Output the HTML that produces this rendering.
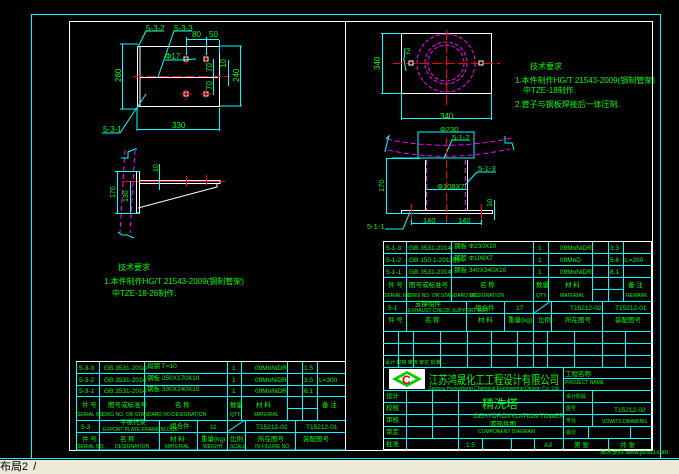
<!DOCTYPE html>
<html><head><meta charset="utf-8"><style>
body{margin:0;width:679px;height:474px;background:#000;overflow:hidden;font-family:"Liberation Sans","Noto Sans CJK SC",sans-serif}
svg{position:absolute;left:0;top:0}
.bar{position:absolute;left:0;top:460px;width:679px;height:14px;background:#ece9d8;font-size:11px;color:#000;line-height:14px}
</style></head><body>
<svg width="679" height="474" viewBox="0 0 679 474" font-family="Liberation Sans, Noto Sans CJK SC, sans-serif">
<g fill="none">
<rect x="31.5" y="14.5" width="629" height="444" stroke="#0ff"/>
<line x1="0" y1="458.5" x2="679" y2="458.5" stroke="#0ff"/>
<rect x="69.5" y="21.5" width="583" height="429" stroke="#fff"/>
<line x1="345.5" y1="21" x2="345.5" y2="450" stroke="#fff"/>
</g>
<!-- left top drawing -->
<g fill="none" stroke="#fff">
<rect x="137.5" y="46.5" width="82" height="60"/>
<line x1="140" y1="46" x2="140" y2="107"/>
</g>
<line x1="133" y1="76.5" x2="230" y2="76.5" stroke="#f00" stroke-dasharray="10 3"/>
<line x1="140" y1="77.5" x2="218" y2="77.5" stroke="#fff"/>
<g fill="#000" stroke="#fff"><rect x="184" y="57" width="4" height="4"/><rect x="204" y="57" width="4" height="4"/><rect x="184" y="92" width="4" height="4"/><rect x="204" y="92" width="4" height="4"/></g>
<g stroke="#f00"><line x1="186" y1="54" x2="186" y2="64"/><line x1="206" y1="54" x2="206" y2="64"/><line x1="181" y1="94" x2="192" y2="94"/><line x1="186" y1="89" x2="186" y2="100"/><line x1="201" y1="94" x2="212" y2="94"/><line x1="206" y1="90" x2="206" y2="98"/></g>
<g stroke="#0ff" fill="none">
<polyline points="120,44 138,44"/><polyline points="120,109 138,109"/><line x1="122.5" y1="44" x2="122.5" y2="109"/>
<line x1="220" y1="46" x2="242" y2="46"/><line x1="220" y1="106" x2="242" y2="106"/><line x1="240.5" y1="46" x2="240.5" y2="106"/>
<line x1="137" y1="108" x2="137" y2="131"/><line x1="219.5" y1="108" x2="219.5" y2="131"/><line x1="137" y1="129.5" x2="219" y2="129.5"/>
<line x1="186.5" y1="37" x2="186.5" y2="55"/><line x1="206.5" y1="37" x2="206.5" y2="55"/><line x1="186" y1="39.5" x2="219" y2="39.5"/>
<line x1="219.5" y1="40" x2="219.5" y2="54"/>
<polyline points="137,49 146,31 164,31"/><polyline points="158,77 174,31 192,31"/><polyline points="102,133 120,133 146,94"/>
<polyline points="165,60 180,60 196,59"/>
<line x1="228.5" y1="60" x2="228.5" y2="86"/><line x1="213.5" y1="59" x2="213.5" y2="95"/>
</g>
<g fill="#0f0" font-size="8">
<text x="146" y="31">5-3-2</text><text x="174" y="31">5-3-3</text><text x="192" y="37">80</text><text x="209" y="37">50</text><text x="165" y="59">Φ17</text>
<text x="172" y="128">330</text><text x="103" y="132">5-3-1</text>
<text transform="translate(121,82) rotate(-90)">280</text><text transform="translate(239,82) rotate(-90)">240</text>
<text transform="translate(226,68) rotate(-90)">10</text><text transform="translate(212,72) rotate(-90)">70</text><text transform="translate(212,90) rotate(-90)">70</text>
</g>
<!-- bracket -->
<line x1="122" y1="181.5" x2="225" y2="181.5" stroke="#f00"/>
<g stroke="#fff" fill="none">
<polyline points="139,180.5 220,180.5 220,183.5 139,183.5"/>
<polyline points="217,184 217,187 138,208"/>
<polyline points="136.5,171 136.5,213 139.5,213 139.5,171"/>
</g>
<g stroke="#f00"><line x1="186.5" y1="176" x2="186.5" y2="187"/><line x1="206.5" y1="175" x2="206.5" y2="185"/></g>
<g stroke="#f0f" stroke-dasharray="5 3"><line x1="125" y1="150" x2="120" y2="233"/><line x1="135" y1="150" x2="130" y2="233"/></g>
<g stroke="#0ff" fill="none">
<polyline points="121,158 128,158 128,152 135,149 137,149"/><polyline points="118,232 122,235 127,235 134,238"/>
<line x1="115" y1="171.5" x2="140" y2="171.5"/><line x1="115" y1="213.5" x2="140" y2="213.5"/><line x1="117.5" y1="171" x2="117.5" y2="213"/>
<line x1="130.5" y1="181" x2="130.5" y2="213"/><line x1="159.5" y1="164" x2="159.5" y2="190"/>
</g>
<g fill="#0f0" font-size="7"><text transform="translate(115,198) rotate(-90)">170</text><text transform="translate(128,202) rotate(-90)">130</text><text transform="translate(158,172) rotate(-90)">10</text></g>
<!-- left notes -->
<g fill="#0f0" font-size="8"><text x="118" y="270">技术要求</text><text x="104" y="284">1.本件制作HG/T 21543-2009(钢制管架)</text><text x="112" y="296">中TZE-18-26制作.</text></g>
<!-- right top drawing -->
<rect x="401.5" y="33.5" width="90" height="60" stroke="#fff" fill="none"/>
<g stroke="#f0f" fill="none" stroke-dasharray="4 2"><circle cx="446" cy="63" r="29"/><circle cx="446" cy="63" r="21"/><circle cx="446" cy="63" r="18"/></g>
<g stroke="#f00" stroke-dasharray="10 3"><line x1="393" y1="63.5" x2="500" y2="63.5"/><line x1="446.5" y1="30" x2="446.5" y2="106"/></g>
<g fill="#000" stroke="#fff"><rect x="409" y="61" width="4" height="4"/><rect x="479" y="61" width="4" height="4"/></g>
<g stroke="#0ff" fill="none"><line x1="381" y1="33.5" x2="402" y2="33.5"/><line x1="381" y1="93.5" x2="402" y2="93.5"/><line x1="382.5" y1="34" x2="382.5" y2="93"/>
<line x1="401.5" y1="94" x2="401.5" y2="120"/><line x1="491.5" y1="94" x2="491.5" y2="120"/><line x1="401" y1="118.5" x2="492" y2="118.5"/><polyline points="406,71 404,60 405,48"/></g>
<g fill="#0f0" font-size="8"><text x="440" y="119">340</text><text transform="translate(380,70) rotate(-90)">340</text><text x="406" y="54">2</text>
<text x="530" y="69">技术要求</text><text x="515" y="83">1.本件制作HG/T 21543-2009(钢制管架)</text><text x="523" y="93">中TZE-18制作.</text><text x="515" y="107">2.管子与钢板焊接后一体压制.</text></g>
<!-- right lower -->
<g stroke="#f0f" fill="none" stroke-dasharray="5 3"><path d="M387,139 Q446,152 512,138"/><path d="M388,150 Q446,163 510,149"/><line x1="426.5" y1="160" x2="426.5" y2="211"/><line x1="465.5" y1="160" x2="465.5" y2="211"/></g>
<g stroke="#fff" fill="none"><line x1="425.5" y1="160" x2="425.5" y2="210"/><line x1="467.5" y1="160" x2="467.5" y2="210"/><rect x="401.5" y="210.5" width="91" height="3"/><polyline points="417,158 474,158"/></g>
<g stroke="#0ff" fill="none"><polyline points="418,158 418,132 474,132 474,158 392,158"/><line x1="386" y1="158.5" x2="420" y2="158.5"/><line x1="386" y1="213.5" x2="420" y2="213.5"/><line x1="386.5" y1="158" x2="386.5" y2="213"/>
<polyline points="386,139 389,136 387,143 385,152"/><polyline points="505,136 505,143 512,143 514,150"/>
<line x1="426" y1="189.5" x2="467" y2="189.5"/><polyline points="444,158 452,140 470,140"/><polyline points="465,185 477,172 496,172"/><polyline points="385,229 403,229 410,212"/>
<line x1="411.5" y1="213" x2="411.5" y2="225"/><line x1="481.5" y1="213" x2="481.5" y2="225"/><line x1="411" y1="223.5" x2="481" y2="223.5"/><line x1="494.5" y1="200" x2="494.5" y2="220"/></g>
<g stroke="#f00"><line x1="446.5" y1="138" x2="446.5" y2="226" stroke-dasharray="8 3"/><line x1="411.5" y1="204" x2="411.5" y2="220"/><line x1="481.5" y1="204" x2="481.5" y2="220"/></g>
<g fill="#0f0" font-size="7.5"><text x="440" y="132">Φ230</text><text x="452" y="140">5-1-2</text><text x="478" y="171">5-1-3</text><text x="437" y="189">Φ108X7</text><text x="423" y="223">140</text><text x="458" y="223">140</text><text x="367" y="229">5-1-1</text><text transform="translate(384,192) rotate(-90)">170</text><text transform="translate(492,207) rotate(-90)">10</text></g>
<!-- right table -->
<g stroke="#0ff" fill="none">
<rect x="383.5" y="241.5" width="268" height="208" stroke="#fff"/>
<path d="M383 253.5H652M383 265.5H652M383 277.5H652M383 301.5H652M383 313.5H652M383 331.5H652M383 343.5H652M383 355.5H652M383 367.5H652M383 390.5H652M563 378.5H652M383 402.5H652M383 414.5H652M383 426.5H652M383 438.5H652"/>
<path d="M406.5 242V301M451.5 242V301M533.5 242V301M548.5 242V301M592.5 242V301M608.5 242V301M623.5 242V301M592 289.5H623"/>
<path d="M406.5 301V331M466.5 301V331M504.5 301V331M533.5 301V331M551.5 301V331M602.5 301V331"/>
<path d="M398.5 331V367M413.5 331V367M440.5 331V367M467.5 331V367M491.5 331V367M517.5 331V367M533.5 331V367M547.5 331V367M574.5 331V367M602.5 331V367M625.5 331V367"/>
<path d="M563.5 367V450M406.5 390V450M432.5 390V438M458.5 390V450M592.5 390V426M588.5 426V438M630.5 426V438M482.5 438V450M511.5 438V450M534.5 438V450M608.5 438V450M534 313L551 301"/>
</g>
<rect x="389" y="369" width="36" height="20" fill="#fff"/>
<polygon points="392,379 407,371 422,379 407,387" fill="#0c0"/><polygon points="398,379 407,374 416,379 407,384" fill="#fff"/>
<text x="402" y="384" fill="#e00" font-size="12" font-weight="bold">C</text>
<g fill="#0f0" font-size="6.5">
<text x="386" y="250">5-1-3</text><text x="409" y="250">GB 3531-2014</text><text x="454" y="248">钢板 Φ230X10</text><text x="538" y="250">1</text><text x="560" y="250">09MnNiDR</text><text x="610" y="250">3.3</text>
<text x="386" y="262">5-1-2</text><text x="409" y="262">GB 150.1-2011附A</text><text x="454" y="260">钢管 Φ108X7</text><text x="538" y="262">1</text><text x="560" y="262">09MnD</text><text x="610" y="262">5.6</text><text x="625" y="262">L=200</text>
<text x="386" y="274">5-1-1</text><text x="409" y="274">GB 3531-2014</text><text x="454" y="272">钢板 340X340X10</text><text x="538" y="274">1</text><text x="560" y="274">09MnNiDR</text><text x="610" y="274">8.1</text>
<text x="388" y="287">件 号</text><text x="409" y="287">图号或标准号</text><text x="480" y="287">名 称</text><text x="536" y="287">数量</text><text x="565" y="287">材 料</text><text x="628" y="287">备 注</text>
<text x="384" y="297" font-size="5">SERIAL NO.</text><text x="408" y="297" font-size="5">DWG NO. OR STANDARD NO.</text><text x="470" y="297" font-size="5">DESIGNATION</text><text x="536" y="297" font-size="5">QTY.</text><text x="560" y="297" font-size="5">MATERIAL</text><text x="626" y="297" font-size="5">REMARK</text>
<text x="388" y="310">5-1</text><text x="415" y="306">支撑组件</text><text x="408" y="312" font-size="5">EXHAUST CHECK-SUPPORT SUIT</text><text x="475" y="310">组合件</text><text x="516" y="310">17</text><text x="570" y="310">T15212-02</text><text x="615" y="310">T15212-01</text>
<text x="388" y="322">件 号</text><text x="425" y="322">名 称</text><text x="478" y="322">材 料</text><text x="508" y="322">重量(kg)</text><text x="538" y="322">比例</text><text x="565" y="322">所在图号</text><text x="615" y="322">装配图号</text>
<text x="429" y="384" font-size="12" textLength="130" lengthAdjust="spacingAndGlyphs">江苏鸿晟化工工程设计有限公司</text>
<text x="428" y="390" font-size="5" textLength="132" lengthAdjust="spacingAndGlyphs">Jiangsu Hongsheng Chemical Engineering Design Co.,Ltd.</text>
<text x="565" y="376">工程名称</text><text x="565" y="384" font-size="5">PROJECT NAME</text>
<text x="482" y="408" font-size="12">精洗塔</text><text x="474" y="418">DEHYDROXYLATION TOWER</text><text x="490" y="426">零部件图</text><text x="478" y="433" font-size="5">COMPONENT DIAGRAM</text>
<text x="614" y="412">T15212-02</text><text x="602" y="423" font-size="5">VOWITS DRAWING</text>
<text x="466" y="447">1:5</text><text x="544" y="447">A3</text><text x="574" y="447">第 张</text><text x="620" y="447">共 张</text>
<text x="385" y="364" font-size="5">设计 校核 审核 审定 批准 ...</text>
<text x="386" y="398">设计</text><text x="386" y="410">校核</text><text x="386" y="422">审核</text><text x="386" y="434">审定</text><text x="386" y="446">批准</text>
<text x="566" y="398" font-size="5">设计阶段</text><text x="566" y="410" font-size="5">图号</text><text x="566" y="422" font-size="5">专业</text><text x="566" y="434" font-size="5">版次</text>
<text x="600" y="454" font-size="6">技术支持 www.jshscl.com</text>
</g>
<!-- left table -->
<g stroke="#0ff" fill="none">
<path d="M76.5 361V450M76 361.5H345M76 373.5H345M76 385.5H345M76 396.5H345M76 420.5H345M76 432.5H345M76 450H345" />
<path d="M99.5 361V450M144.5 361V420M227.5 361V420M241.5 361V420M287.5 361V420M302.5 361V420M317.5 361V420M287 408.5H317"/>
<path d="M159.5 420V450M197.5 420V450M227.5 420V450M245.5 420V450M295.5 420V450M227 432L245 420"/>
</g>
<line x1="76" y1="361.5" x2="345" y2="361.5" stroke="#fff"/>
<g fill="#0f0" font-size="6.5">
<text x="79" y="370">5-3-3</text><text x="104" y="370">GB 3531-2014</text><text x="147" y="368">扁钢 T=10</text><text x="232" y="370">1</text><text x="255" y="370">09MnNiDR</text><text x="304" y="370">1.5</text>
<text x="79" y="382">5-3-2</text><text x="104" y="382">GB 3531-2014</text><text x="147" y="380">钢板 250X170X10</text><text x="232" y="382">1</text><text x="255" y="382">09MnNiDR</text><text x="304" y="382">3.5</text><text x="319" y="382">L=300</text>
<text x="79" y="393">5-3-1</text><text x="104" y="393">GB 3531-2014</text><text x="147" y="391">钢板 330X240X10</text><text x="232" y="393">1</text><text x="255" y="393">09MnNiDR</text><text x="304" y="393">6.1</text>
<text x="82" y="407">件 号</text><text x="108" y="407">图号或标准号</text><text x="175" y="407">名 称</text><text x="230" y="407">数量</text><text x="256" y="407">材 料</text><text x="322" y="407">备 注</text>
<text x="77" y="416" font-size="5">SERIAL NO.</text><text x="102" y="416" font-size="5">DWG NO. OR STANDARD NO.</text><text x="172" y="416" font-size="5">DESIGNATION</text><text x="230" y="416" font-size="5">QTY.</text><text x="254" y="416" font-size="5">MATERIAL</text>
<text x="81" y="429">5-3</text><text x="120" y="424">平板托架</text><text x="103" y="431" font-size="5">EXPORT PLATE-FRAME BLOCK</text><text x="170" y="428">组合件</text><text x="210" y="429">11</text><text x="256" y="429">T15212-02</text><text x="306" y="429">T15212-01</text>
<text x="82" y="441">件 号</text><text x="120" y="441">名 称</text><text x="170" y="441">材 料</text><text x="201" y="441">重量(kg)</text><text x="230" y="441">比例</text><text x="258" y="441">所在图号</text><text x="303" y="441">装配图号</text>
<text x="77" y="448" font-size="5">SERIAL NO.</text><text x="115" y="448" font-size="5">DESIGNATION</text><text x="165" y="448" font-size="5">MATERIAL</text><text x="203" y="448" font-size="5">WEIGHT</text><text x="230" y="448" font-size="5">SCALE</text><text x="255" y="448" font-size="5">IN FIGURE NO.</text>
</g>
</svg>
<div class="bar">布局2 <span style="margin-left:2px">/</span></div>
</body></html>
